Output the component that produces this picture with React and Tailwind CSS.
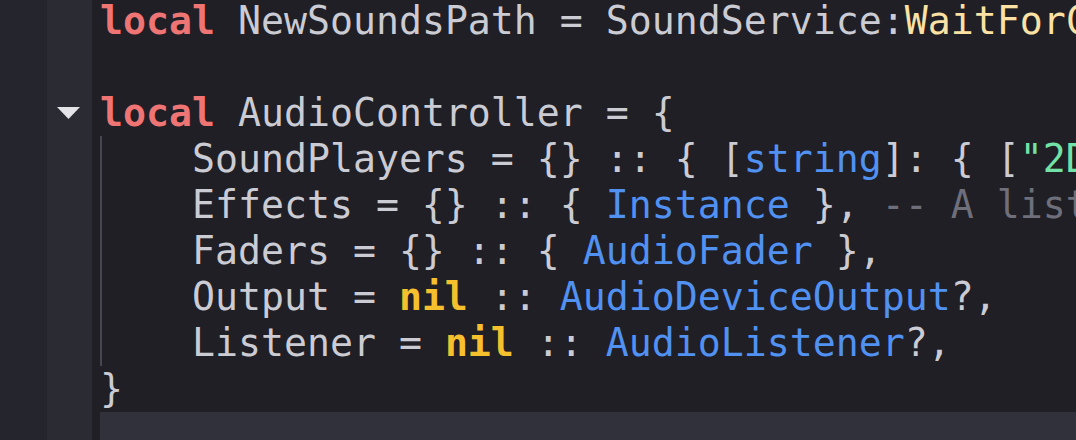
import React from 'react'

const C = {
  kw: 'text-[#ef7575] font-bold',
  id: 'text-[#cbcbd3]',
  fn: 'text-[#fbe2a4]',
  ty: 'text-[#5191f2]',
  nil: 'text-[#f6bf2d] font-bold',
  str: 'text-[#72e2a6]',
  cm: 'text-[#6e6f7b]',
}

function T({ c = 'id', children }) {
  return <span className={C[c]}>{children}</span>
}

function Line({ children, className = '' }) {
  return <div className={`h-[46px] leading-[46px] whitespace-pre ${className}`}>{children}</div>
}

export default function App() {
  return (
    <div className="w-[1076px] h-[440px] overflow-hidden flex bg-[#1f1f25]" style={{ fontFamily: '"DejaVu Sans Mono", "Liberation Mono", monospace' }}>
      <div className="w-[47px] shrink-0 bg-[#25262d]" />
      <div className="w-[45px] shrink-0 bg-[#2a2b33] -mt-[2px]">
        <div className="h-[46px]" />
        <div className="h-[46px]" />
        <div className="h-[46px] flex items-center justify-center">
          <svg width="23" height="14" viewBox="0 0 23 14" className="ml-[-2px]">
            <polygon points="0,1 23,1 11.5,13" fill="#e4e4e8" />
          </svg>
        </div>
      </div>
      <div className="flex-1 pl-[8px] -mt-[2px] text-[38.2px] overflow-hidden">
        <Line><T c="kw">local</T><T> NewSoundsPath = SoundService:</T><T c="fn">WaitForChild</T><T>(</T></Line>
        <Line> </Line>
        <Line><T c="kw">local</T><T> AudioController = {'{'}</T></Line>
        <div className="border-l-2 border-[#45464f]">
          <div className="-ml-[2px]">
            <Line><T>{'    SoundPlayers = {} :: { ['}</T><T c="ty">string</T><T>{']: { ['}</T><T c="str">"2D"</T><T>]</T></Line>
            <Line><T>{'    Effects = {} :: { '}</T><T c="ty">Instance</T><T>{' }, '}</T><T c="cm">-- A list of effects</T></Line>
            <Line><T>{'    Faders = {} :: { '}</T><T c="ty">AudioFader</T><T>{' },'}</T></Line>
            <Line><T>{'    Output = '}</T><T c="nil">nil</T><T>{' :: '}</T><T c="ty">AudioDeviceOutput</T><T>?,</T></Line>
            <Line><T>{'    Listener = '}</T><T c="nil">nil</T><T>{' :: '}</T><T c="ty">AudioListener</T><T>?,</T></Line>
          </div>
        </div>
        <Line><T>{'}'}</T></Line>
        <Line className="bg-[#30313b]"> </Line>
      </div>
    </div>
  )
}
